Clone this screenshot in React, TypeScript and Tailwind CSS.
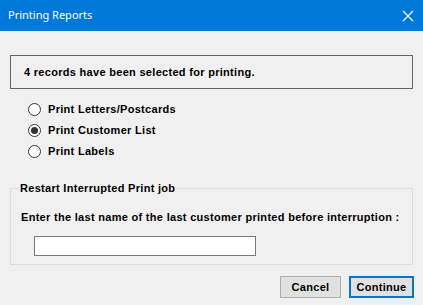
import React, { useState } from "react";

const options = ["Print Letters/Postcards", "Print Customer List", "Print Labels"];

const App: React.FC = () => {
  const [selected, setSelected] = useState<number>(1);
  const [lastName, setLastName] = useState<string>("");

  return (
    <div className="w-[423px] h-[305px] bg-[#f0f0f0] flex flex-col font-['Liberation_Sans',Arial,sans-serif] text-[11px] font-bold tracking-[0.3px] text-black overflow-hidden">
      {/* Title bar */}
      <div className="h-[31px] bg-[#0078d7] flex items-center justify-between pl-[8px] pr-[9px] shrink-0">
        <span className="text-white text-[11px] font-normal tracking-normal font-['Noto_Sans',sans-serif]">Printing Reports</span>
        <svg width="12" height="12" viewBox="0 0 12 12" className="text-white">
          <path d="M1 1 L11 11 M11 1 L1 11" stroke="currentColor" strokeWidth="1.1" />
        </svg>
      </div>

      <div className="flex flex-col px-[10px] pt-[24px]">
        {/* Message */}
        <div className="h-[34px] border border-[#646464] flex items-center pl-[13px]">
          4 records have been selected for printing.
        </div>

        {/* Options */}
        <div className="flex flex-col pl-[18px] mt-[10px]">
          {options.map((label, i) => (
            <div
              key={label}
              className="h-[21px] flex items-center gap-[7px] cursor-default"
              onClick={() => setSelected(i)}
            >
              <div className="w-[13px] h-[13px] rounded-full border border-[#333333] bg-white flex items-center justify-center">
                {selected === i && <div className="w-[7px] h-[7px] rounded-full bg-[#333333]" />}
              </div>
              <span>{label}</span>
            </div>
          ))}
        </div>

        {/* Restart group */}
        <fieldset className="mt-[20px] border border-[#dcdcdc] h-[83px] flex flex-col">
          <legend className="ml-[7px] px-[2px] leading-[13px]">Restart Interrupted Print job</legend>
          <div className="pl-[10px] mt-[14px]">Enter the last name of the last customer printed before interruption :</div>
          <div className="pl-[23px] mt-[10px]">
            <input
              value={lastName}
              onChange={(e) => setLastName(e.target.value)}
              className="w-[222px] h-[20px] bg-white border border-[#7a7a7a] outline-none px-[3px] font-normal"
            />
          </div>
        </fieldset>

        {/* Buttons */}
        <div className="flex justify-end gap-[8px] mt-[11px] mr-[-1px]">
          <button className="w-[61px] h-[22px] bg-[#e1e1e1] border border-[#adadad] font-bold text-[11px] tracking-[0.3px]">
            Cancel
          </button>
          <button className="w-[65px] h-[22px] bg-[#e1e1e1] border-2 border-[#0078d7] font-bold text-[11px] tracking-[0.3px]">
            Continue
          </button>
        </div>
      </div>
    </div>
  );
};

export default App;
